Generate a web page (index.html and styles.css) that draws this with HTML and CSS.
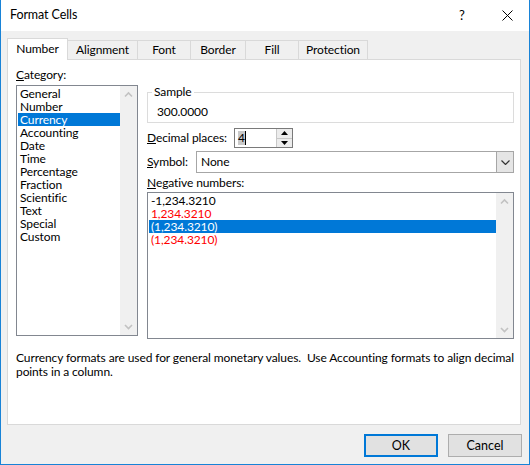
FILE: index.html
```html
<!DOCTYPE html>
<html>
<head>
<meta charset="utf-8">
<link rel="stylesheet" href="styles.css">
</head>
<body>
<div class="win">
  <div class="titlebar">
    <span class="title">Format Cells</span>
    <span class="help">?</span>
    <span class="close"><svg width="11" height="11" viewBox="0 0 11 11"><path d="M0.5 0.5 L10.5 10.5 M10.5 0.5 L0.5 10.5" stroke="#000" stroke-width="1" fill="none"/></svg></span>
  </div>
  <div class="body">
    <div class="tabs">
      <div class="tab active w-number">Number</div>
      <div class="tab w-align">Alignment</div>
      <div class="tab w-font">Font</div>
      <div class="tab w-border">Border</div>
      <div class="tab w-fill">Fill</div>
      <div class="tab w-prot">Protection</div>
    </div>
    <div class="panel">
      <div class="cols">
        <div class="left">
          <div class="label"><u>C</u>ategory:</div>
          <div class="listbox cat">
            <ul class="items">
              <li>General</li>
              <li>Number</li>
              <li class="sel">Currency</li>
              <li>Accounting</li>
              <li>Date</li>
              <li>Time</li>
              <li>Percentage</li>
              <li>Fraction</li>
              <li>Scientific</li>
              <li>Text</li>
              <li>Special</li>
              <li>Custom</li>
            </ul>
            <div class="vscroll">
              <svg class="arrow" width="17" height="17" viewBox="0 0 17 17"><path d="M5 10.5 L8.5 7 L12 10.5" stroke="#c2c2c2" stroke-width="1.6" fill="none"/></svg>
              <svg class="arrow" width="17" height="17" viewBox="0 0 17 17"><path d="M5 7 L8.5 10.5 L12 7" stroke="#c2c2c2" stroke-width="1.6" fill="none"/></svg>
            </div>
          </div>
        </div>
        <div class="right">
          <fieldset class="sample">
            <legend>Sample</legend>
            <div class="sample-val">300.0000</div>
          </fieldset>
          <div class="row dec">
            <span class="row-label"><u>D</u>ecimal places:</span>
            <div class="spin">
              <div class="spin-val"><span class="hl">4</span><span class="caret"></span></div>
              <div class="spin-btns">
                <span class="sbtn"><svg width="7" height="4" viewBox="0 0 7 4"><path d="M0 4 L3.5 0 L7 4 Z" fill="#000"/></svg></span>
                <span class="sbtn"><svg width="7" height="4" viewBox="0 0 7 4"><path d="M0 0 L3.5 4 L7 0 Z" fill="#000"/></svg></span>
              </div>
            </div>
          </div>
          <div class="row sym">
            <span class="row-label"><u>S</u>ymbol:</span>
            <div class="combo">
              <span class="combo-val">None</span>
              <span class="drop"><svg width="9" height="5" viewBox="0 0 9 5"><path d="M0.5 0.5 L4.5 4.5 L8.5 0.5" stroke="#333" stroke-width="1.2" fill="none"/></svg></span>
            </div>
          </div>
          <div class="label neg-label"><u>N</u>egative numbers:</div>
          <div class="listbox neg">
            <ul class="items">
              <li>-1,234.3210</li>
              <li class="red">1,234.3210</li>
              <li class="sel">(1,234.3210)</li>
              <li class="red">(1,234.3210)</li>
            </ul>
            <div class="vscroll">
              <svg class="arrow" width="17" height="17" viewBox="0 0 17 17"><path d="M5 10.5 L8.5 7 L12 10.5" stroke="#c2c2c2" stroke-width="1.6" fill="none"/></svg>
              <svg class="arrow" width="17" height="17" viewBox="0 0 17 17"><path d="M5 7 L8.5 10.5 L12 7" stroke="#c2c2c2" stroke-width="1.6" fill="none"/></svg>
            </div>
          </div>
        </div>
      </div>
      <p class="desc">Currency formats are used for general monetary values.&nbsp; Use Accounting formats to align decimal points in a column.</p>
    </div>
    <div class="footer">
      <button class="btn ok">OK</button>
      <button class="btn">Cancel</button>
    </div>
  </div>
</div>
</body>
</html>
```
FILE: styles.css
```css
* { box-sizing: border-box; }
html, body { margin: 0; padding: 0; background: #fff; }
body {
  font-family: Lato, "Noto Sans", sans-serif;
  font-size: 12px;
  letter-spacing: -0.1px;
  line-height: 14px;
  color: #000;
}
.win {
  width: 530px;
  height: 465px;
  border: 1px solid #1883d7;
  border-top: 0;
  display: flex;
  flex-direction: column;
}
.titlebar {
  height: 31px;
  background: #fff;
  display: flex;
  align-items: center;
  padding-left: 9px;
  font-size: 12.5px;
}
.title { flex: 1; padding-bottom: 2px; }
.help { width: 10px; margin-right: 33px; font-size: 13px; padding-bottom: 2px; }
.close { width: 11px; height: 11px; margin-right: 16px; display: flex; }
.body {
  flex: 1;
  background: #f0f0f0;
  padding: 7px 8px 0 6px;
}
.tabs {
  display: flex;
  align-items: flex-end;
  height: 21px;
}
.tab {
  height: 19px;
  border: 1px solid #d9d9d9;
  border-bottom: 0;
  margin-left: -1px;
  text-align: center;
  padding-top: 2px;
  background: #f0f0f0;
  white-space: nowrap;
}
.tab.active {
  height: 22px;
  margin-bottom: -1px;
  margin-left: 0;
  background: #fff;
  padding-top: 3px;
  position: relative;
  z-index: 1;
}
.w-number { width: 61px; }
.w-align { width: 71px; }
.w-font { width: 54px; }
.w-border { width: 56px; }
.w-fill { width: 54px; }
.w-prot { width: 70px; }
.panel {
  height: 366px;
  background: #fff;
  border: 1px solid #d9d9d9;
  padding: 8px 6px 0 8px;
}
.cols {
  display: flex;
  align-items: flex-start;
  gap: 9px;
}
.left { width: 122px; }
.right { width: 367px; padding-top: 17px; }
.label { height: 14px; margin-bottom: 3px; white-space: nowrap; }
.listbox {
  border: 1px solid #828790;
  display: flex;
  background: #fff;
}
.listbox.cat { height: 251px; }
.listbox.neg { height: 147px; }
.items {
  list-style: none;
  margin: 0;
  padding: 1px 0 0 1px;
  flex: 1;
}
.items li {
  height: 13px;
  line-height: 13px;
  padding-left: 2px;
  white-space: nowrap;
}
.items li.sel { background: #0078d7; color: #fff; }
.items li.red { color: #ff0000; }
.vscroll {
  width: 17px;
  background: #f0f0f0;
  display: flex;
  flex-direction: column;
  justify-content: space-between;
}
.arrow { display: block; }
.sample {
  margin: 0;
  border: 1px solid #dcdcdc;
  padding: 6px 0 3px 9px;
}
.sample legend {
  padding: 0 2px;
  margin-left: -5px;
  line-height: 14px;
}
.sample-val { height: 14px; }
.row { display: flex; align-items: center; white-space: nowrap; }
.dec { margin-top: 5px; height: 20px; }
.dec .row-label { width: 87px; }
.spin {
  width: 59px;
  height: 20px;
  border: 1px solid #7a7a7a;
  display: flex;
  background: #fff;
}
.spin-val {
  flex: 1;
  display: flex;
  align-items: center;
  padding-left: 3px;
}
.hl { background: #c9c9c9; line-height: 14px; }
.caret { width: 1px; height: 14px; background: #000; }
.spin-btns {
  width: 16px;
  display: flex;
  flex-direction: column;
  border-left: 1px solid #c8c8c8;
}
.sbtn {
  flex: 1;
  display: flex;
  align-items: center;
  justify-content: center;
  background: #ececec;
  border-bottom: 1px solid #c8c8c8;
}
.sbtn:last-child { border-bottom: 0; }
.sym { margin-top: 3px; height: 22px; }
.sym .row-label { width: 49px; }
.combo {
  width: 318px;
  height: 22px;
  border: 1px solid #a6a6a6;
  display: flex;
  background: #fff;
}
.combo-val { flex: 1; padding-left: 4px; line-height: 20px; }
.drop {
  width: 17px;
  background: #e5e5e5;
  border-left: 1px solid #a6a6a6;
  display: flex;
  align-items: center;
  justify-content: center;
}
.neg-label { margin-top: 3px; margin-bottom: 2px; }
.desc {
  margin: 12px 0 0 0;
  line-height: 14px;
}
.footer {
  display: flex;
  justify-content: flex-end;
  gap: 10px;
  margin-top: 9px;
  margin-right: -1px;
}
.btn {
  width: 74px;
  height: 23px;
  font-family: inherit;
  font-size: 12.5px;
  letter-spacing: 0;
  background: #e1e1e1;
  border: 1px solid #adadad;
  padding: 0 0 1px;
  color: #000;
}
.btn.ok { border: 2px solid #0078d7; }
```
